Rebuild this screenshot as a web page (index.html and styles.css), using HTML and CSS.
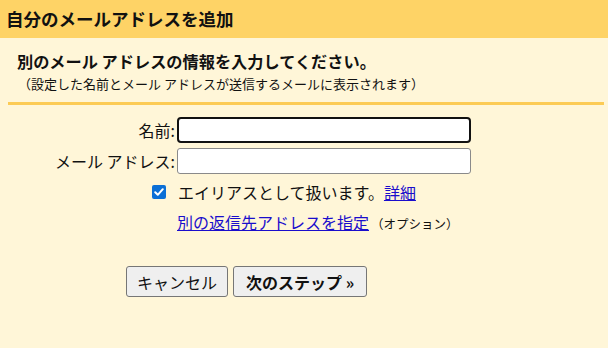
FILE: index.html
```html
<!DOCTYPE html>
<html lang="ja">
<head>
    <meta charset="UTF-8">
    <title>自分のメールアドレスを追加</title>
    <link rel="stylesheet" href="styles.css">
</head>
<body>
    <div class="header">自分のメールアドレスを追加</div>

    <div class="content">
        <div class="intro">
            <div class="intro-title">別のメール アドレスの情報を入力してください。</div>
            <div class="intro-note">（設定した名前とメール アドレスが送信するメールに表示されます）</div>
        </div>

        <div class="form">
            <label class="form-label" for="name">名前:</label>
            <input class="form-input focused" type="text" id="name">

            <label class="form-label" for="email">メール アドレス:</label>
            <input class="form-input" type="text" id="email">

            <div class="form-check">
                <span class="checkbox">
                    <svg width="14" height="14" viewBox="0 0 14 14">
                        <rect width="14" height="14" rx="2" fill="#0b6fd6"/>
                        <path d="M3.2 7.2 L5.8 9.8 L10.8 4.2" stroke="#fff" stroke-width="2" fill="none" stroke-linecap="round" stroke-linejoin="round"/>
                    </svg>
                </span>
                <span>エイリアスとして扱います。<a href="#">詳細</a></span>
            </div>

            <div class="form-reply">
                <a href="#">別の返信先アドレスを指定</a><span class="optional">（オプション）</span>
            </div>
        </div>

        <div class="buttons">
            <button class="btn">キャンセル</button>
            <button class="btn btn-next">次のステップ »</button>
        </div>
    </div>
</body>
</html>
```

FILE: styles.css
```css
body {
    margin: 0;
    font-family: 'Noto Sans CJK JP', 'Noto Sans', sans-serif;
    background-color: #fff6d8;
    color: #111;
    width: 608px;
    height: 348px;
    overflow: hidden;
}

.header {
    background-color: #fed366;
    height: 38px;
    line-height: 38px;
    padding-left: 6px;
    font-size: 17.5px;
    font-weight: bold;
    color: #111;
}

.content {
    padding: 0 4px 0 8px;
}

.intro {
    padding: 13px 0 10px 9px;
    border-bottom: 3px solid #fccb55;
}

.intro-title {
    font-size: 16.2px;
    font-weight: bold;
    line-height: 20px;
}

.intro-note {
    font-size: 13px;
    line-height: 17px;
    margin-top: 4px;
    padding-left: 1px;
}

.form {
    display: grid;
    grid-template-columns: 167px 294px;
    column-gap: 2px;
    row-gap: 5px;
    align-items: center;
    margin-top: 12px;
    font-size: 16px;
    line-height: 22px;
}

.form-label {
    text-align: right;
}

.form-input {
    box-sizing: border-box;
    height: 26px;
    margin: 0;
    border: 1px solid #8a8a8a;
    border-radius: 3px;
    background: #fff;
    font-size: 15px;
    padding: 0 4px;
}

.form-input.focused {
    border: 2px solid #111;
    border-radius: 4px;
}

.form-check {
    grid-column: 1 / 3;
    display: flex;
    align-items: center;
    margin-top: 2px;
    padding-left: 144px;
}

.checkbox {
    display: inline-flex;
    margin-right: 12px;
}

.form-reply {
    grid-column: 2;
    margin-top: 3px;
}

a {
    color: #1a0dcc;
    text-decoration: underline;
}

.optional {
    font-size: 12.5px;
    margin-left: 2px;
}

.buttons {
    display: flex;
    gap: 5px;
    margin-top: 31px;
    padding-left: 118px;
}

.btn {
    height: 31px;
    padding: 0 10px;
    font-family: inherit;
    font-size: 16px;
    color: #111;
    background: #efefef;
    border: 1px solid #767676;
    border-radius: 3px;
}

.btn-next {
    font-weight: bold;
    padding: 0 12px;
}
```
